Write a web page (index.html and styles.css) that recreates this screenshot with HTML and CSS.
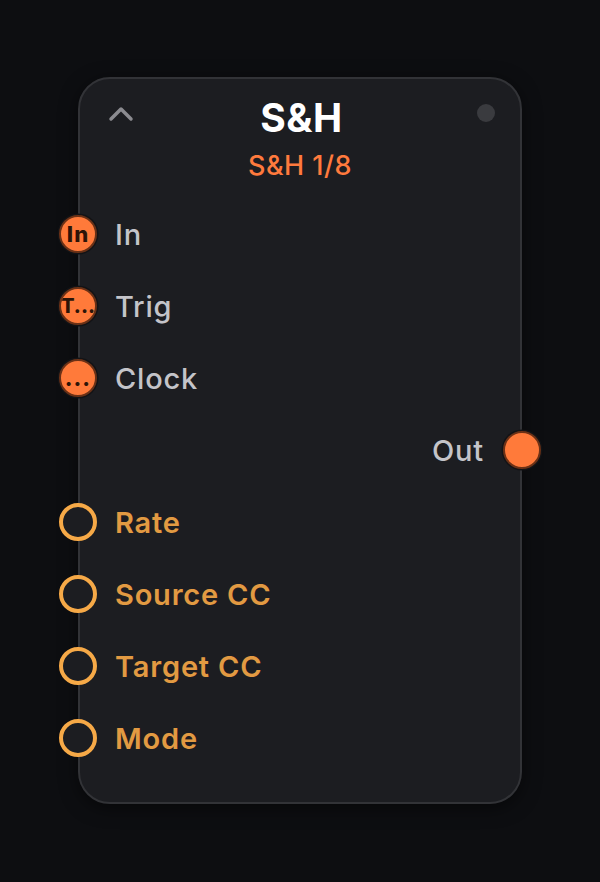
FILE: index.html
```html
<!DOCTYPE html>
<html>
<head>
    <title>S&amp;H</title>
    <link rel="stylesheet" href="styles.css">
</head>
<body>
    <div class="node">
        <div class="node-head">
            <svg class="collapse" width="26" height="16" viewBox="0 0 26 16">
                <polyline points="3,13 13,3 23,13" fill="none" stroke="#8b8b90" stroke-width="3.5" stroke-linecap="round" stroke-linejoin="round"/>
            </svg>
            <div class="title">S&amp;H</div>
            <div class="status"></div>
        </div>
        <div class="subtitle">S&amp;H 1/8</div>

        <div class="ports">
            <div class="row"><span class="port filled">In</span><span class="label">In</span></div>
            <div class="row"><span class="port filled tight">T...</span><span class="label">Trig</span></div>
            <div class="row"><span class="port filled">...</span><span class="label">Clock</span></div>
            <div class="row out"><span class="label">Out</span><span class="port filled"></span></div>
            <div class="row"><span class="port hollow"></span><span class="label param">Rate</span></div>
            <div class="row"><span class="port hollow"></span><span class="label param">Source CC</span></div>
            <div class="row"><span class="port hollow"></span><span class="label param">Target CC</span></div>
            <div class="row"><span class="port hollow"></span><span class="label param">Mode</span></div>
        </div>
    </div>
</body>
</html>
```

FILE: styles.css
```css
body { margin: 0; padding: 77px 78px; background: #0d0e11; font-family: Inter, "Noto Sans", sans-serif; }
.node { box-sizing: border-box; width: 444px; background: #1c1d21; border: 2px solid #323337; border-radius: 32px; padding: 16px 0 28px; box-shadow: 0 4px 18px rgba(0,0,0,0.5); }
.node-head { display: grid; grid-template-columns: 1fr auto 1fr; align-items: start; padding: 0 25px 0 28px; }
.collapse { display: block; margin-top: 11px; }
.title { color: #ffffff; font-size: 39px; font-weight: 700; line-height: 46px; letter-spacing: 0.5px; text-align: center; }
.status { justify-self: end; width: 18px; height: 18px; margin-top: 9px; border-radius: 50%; background: #3a3b3f; }
.subtitle { margin-top: 9px; color: #ff7a3d; font-size: 27px; font-weight: 500; line-height: 32px; letter-spacing: 0.5px; text-align: center; }
.ports { margin-top: 16px; }
.row { display: flex; align-items: center; gap: 18px; height: 72px; }
.row.out { justify-content: flex-end; gap: 19px; }
.port { box-sizing: border-box; flex: none; width: 38px; height: 38px; margin-left: -21px; border-radius: 50%; display: flex; align-items: center; justify-content: center; overflow: hidden; white-space: nowrap; }
.row.out .port { margin-left: 0; margin-right: -21px; }
.port.filled { background: #ff7a3a; border: 2px solid #6b3116; box-shadow: 0 0 0 1.5px #121316; color: #2c1408; font-size: 22px; font-weight: 800; letter-spacing: 1px; }
.port.tight { font-size: 20px; letter-spacing: 0; }
.port.hollow { background: #1c1d21; border: 4px solid #f6a947; }
.label { color: #c4c4c9; font-size: 29px; font-weight: 500; letter-spacing: 0.8px; }
.label.param { color: #e29a42; font-weight: 600; }
```
